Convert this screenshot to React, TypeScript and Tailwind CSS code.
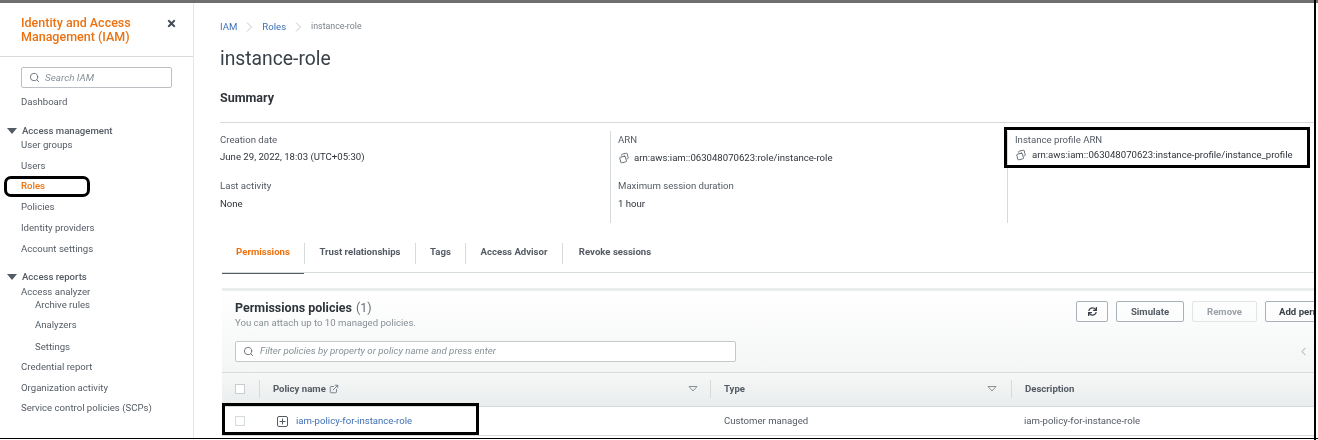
import React from "react";
import { Search, ChevronLeft, ExternalLink, Copy } from "lucide-react";
import { FaSync, FaTimes } from "react-icons/fa";

const Caret = () => (
  <svg width="14" height="6" viewBox="0 0 14 6" className="shrink-0">
    <path d="M2 0h10L7 6z" fill="#545b64" />
  </svg>
);

const SortCaret = () => (
  <svg width="10" height="6" viewBox="0 0 10 6" className="shrink-0">
    <path d="M1 .5h8L5 5z" fill="none" stroke="#8b9198" strokeWidth="1" />
  </svg>
);

const Chevron = ({ className }: { className: string }) => (
  <svg width="7" height="10" viewBox="0 0 7 10" className={className}>
    <path d="M1 .5l4.5 4.5L1 9.5" fill="none" stroke="#c3c9cc" strokeWidth="1" />
  </svg>
);

const NavItem = ({ label, h, active, sub }: { label: string; h: string; active?: boolean; sub?: boolean }) => (
  <div className={`flex items-center ${h} ${sub ? "pl-[35px]" : "pl-[21px]"} ${active ? "font-medium text-[#ec7211]" : "text-[#545b64]"}`}>
    {label}
  </div>
);

const Field = ({ label, children, h = "h-[17px]" }: { label: string; children: React.ReactNode; h?: string }) => (
  <div className="flex flex-col">
    <div className="flex h-[17px] items-center text-[#545b64]">{label}</div>
    <div className={`mt-[1px] flex ${h} items-center text-[#2f343b]`}>{children}</div>
  </div>
);

const tabs = [
  { label: "Trust relationships", w: "w-[111px]" },
  { label: "Tags", w: "w-[50px]" },
  { label: "Access Advisor", w: "w-[97px]" },
  { label: "Revoke sessions", w: "w-[105px]" },
];

const ToolButton = ({ children, disabled, w }: { children: React.ReactNode; disabled?: boolean; w: string }) => (
  <div
    className={`flex h-[21px] ${w} shrink-0 items-center justify-center whitespace-nowrap rounded-[2px] border font-bold ${
      disabled ? "border-[#e1e4e8] text-[#9ba1a8]" : "border-[#aab0b7] text-[#545b64]"
    }`}
  >
    {children}
  </div>
);

const App = () => {
  return (
    <div className="relative h-[440px] w-[1318px] overflow-hidden bg-white font-['Roboto',sans-serif] text-[9.6px] leading-none">
      <div className="h-[3px] bg-[#6f6f6f]" />
      <div className="flex h-[435px] blur-[0.3px]">
        {/* sidebar */}
        <aside className="relative w-[194px] shrink-0 border-r border-[#e4e6e8]">
          <div className="flex h-[54px] items-start justify-between border-b border-[#d9dbdd] pl-[21px] pr-[16px] pt-[13px]">
            <div className="text-[12.5px] font-medium leading-[14px] text-[#ec7211]">
              Identity and Access
              <br />
              Management (IAM)
            </div>
            <FaTimes size={11} className="mt-[2px] text-[#444b54]" />
          </div>
          <div className="mx-[21px] mt-[10px] flex h-[21px] w-[151px] items-center gap-[5px] rounded-[2px] border border-[#bcc0c5] pl-[7px] text-[9.9px] italic text-[#879196]">
            <Search size={11} strokeWidth={2} className="text-[#687078]" />
            Search IAM
          </div>
          <NavItem label="Dashboard" h="h-[21px] mt-[3px]" />
          <div className="mt-[12px] flex h-[14px] items-center gap-[3px] pl-[5px] font-medium text-[#545b64]">
            <Caret />
            Access management
          </div>
          <NavItem label="User groups" h="h-[14px]" />
          <NavItem label="Users" h="h-[19px] mt-[4px]" />
          <NavItem label="Roles" h="h-[20px] mt-[1px]" active />
          <NavItem label="Policies" h="h-[21px]" />
          <NavItem label="Identity providers" h="h-[21px]" />
          <NavItem label="Account settings" h="h-[21px]" />
          <div className="mt-[11px] flex h-[14px] items-center gap-[3px] pl-[5px] font-medium text-[#545b64]">
            <Caret />
            Access reports
          </div>
          <NavItem label="Access analyzer" h="h-[16px]" />
          <NavItem label="Archive rules" h="h-[10px]" sub />
          <NavItem label="Analyzers" h="h-[21px] mt-[4px]" sub />
          <NavItem label="Settings" h="h-[20px] mt-[2px]" sub />
          <NavItem label="Credential report" h="h-[19px]" />
          <NavItem label="Organization activity" h="h-[20px] mt-[2px]" />
          <NavItem label="Service control policies (SCPs)" h="h-[19px]" />
        </aside>

        {/* main */}
        <main className="min-w-0 flex-1 pl-[26px]">
          <div className="mt-[16px] flex h-[15px] items-center text-[#3f6fb5]">
            <span>IAM</span>
            <Chevron className="mx-[9px]" />
            <span>Roles</span>
            <Chevron className="mx-[9px]" />
            <span className="text-[8.8px] text-[#7b8289]">instance-role</span>
          </div>
          <h1 className="mt-[12px] flex h-[26px] items-center text-[19.3px] font-normal text-[#3a4048]">instance-role</h1>
          <div className="mt-[18px] flex h-[16px] items-center text-[12.5px] font-bold text-[#2f343b]">Summary</div>

          <div className="mt-[16px] border-t border-[#d5dbdb] pt-[8px]">
            <div className="flex h-[92px]">
              <div className="flex w-[390px] flex-col gap-[13px]">
                <Field label="Creation date" h="h-[15px]">
                  June 29, 2022, 18:03 (UTC+05:30)
                </Field>
                <Field label="Last activity">None</Field>
              </div>
              <div className="flex w-[397px] flex-col gap-[11px] border-l border-[#d5dbdb] pl-[7px]">
                <Field label="ARN">
                  <Copy size={10} className="ml-[1px] mr-[5px] -scale-x-100 rotate-[-15deg] text-[#545b64]" />
                  arn:aws:iam::063048070623:role/instance-role
                </Field>
                <Field label="Maximum session duration">1 hour</Field>
              </div>
              <div className="flex-1 border-l border-[#d5dbdb] pl-[7px]">
                <div className="flex h-[17px] items-center text-[#545b64]">Instance profile ARN</div>
                <div className="flex h-[14px] items-center whitespace-nowrap text-[#2f343b]">
                  <Copy size={10} className="ml-[1px] mr-[6px] -scale-x-100 rotate-[-15deg] text-[#545b64]" />
                  arn:aws:iam::063048070623:instance-profile/instance_profile
                </div>
              </div>
            </div>
          </div>

          {/* tabs */}
          <div className="ml-[2px] mt-[11px] flex h-[39px] items-start border-b border-[#d5dbdb] font-bold text-[#545b64]">
            <div className="relative flex h-[39px] w-[82px] items-center justify-center pb-[3px] text-[#ec7211]">
              <div className="absolute bottom-[-1px] left-0 right-0 h-[1px] bg-[#545b64]" />
              Permissions
            </div>
            {tabs.map((t) => (
              <div key={t.label} className="mt-[9px] flex h-[21px] items-center">
                <div className={`flex ${t.w} h-full items-center justify-center border-l border-[#d5dbdb] pb-[3px]`}>{t.label}</div>
              </div>
            ))}
          </div>

          {/* permissions policies panel */}
          <section className="ml-[2px] mt-[15px] border-t-[3px] border-[#eaeded]">
            <div className="h-[81px] bg-gradient-to-b from-white to-[#f4f5f5] pl-[13px]">
              <div className="flex justify-between pt-[10px]">
                <div>
                  <div className="flex h-[15px] items-center text-[12.5px] font-bold text-[#2f343b]">
                    Permissions policies<span className="ml-[4px] font-normal text-[#687078]">(1)</span>
                  </div>
                  <div className="mt-[1px] flex h-[12px] items-center text-[#879196]">You can attach up to 10 managed policies.</div>
                </div>
                <div className="flex w-[239px] shrink-0 gap-[8px] overflow-hidden">
                  <ToolButton w="w-[32px]">
                    <FaSync size={9} className="text-[#3a4048]" />
                  </ToolButton>
                  <ToolButton w="w-[68px]">Simulate</ToolButton>
                  <ToolButton w="w-[65px]" disabled>
                    Remove
                  </ToolButton>
                  <div className="flex h-[21px] w-[90px] shrink-0 items-center whitespace-nowrap rounded-[2px] border border-[#aab0b7] pl-[13px] font-bold text-[#3a4048]">
                    Add permissions
                  </div>
                </div>
              </div>
              <div className="mt-[12px] flex items-center justify-between pr-[5px]">
                <div className="flex h-[21px] w-[501px] items-center gap-[6px] rounded-[2px] border border-[#c4c8cc] bg-white pb-[1px] pl-[7px] text-[9.7px] italic text-[#879196]">
                  <Search size={11} className="text-[#687078]" />
                  Filter policies by property or policy name and press enter
                </div>
                <ChevronLeft size={13} className="text-[#c4c8cc]" />
              </div>
            </div>

            {/* table header */}
            <div className="flex h-[35px] items-center border-y border-[#d5dbdb] bg-gradient-to-b from-[#f6f7f7] to-[#eaeded] pb-[2px] font-bold text-[#545b64]">
              <div className="ml-[13px] h-[10px] w-[10px] shrink-0 border border-[#c9cdd1] bg-white" />
              <div className="ml-[14px] flex h-[18px] w-[451px] items-center border-l border-[#d5dbdb] pl-[13px]">
                Policy name
                <ExternalLink size={10} className="ml-[3px] text-[#687078]" />
                <span className="ml-auto mr-[12px]">
                  <SortCaret />
                </span>
              </div>
              <div className="flex h-[18px] w-[301px] items-center border-l border-[#d5dbdb] pl-[13px]">
                Type
                <span className="ml-auto mr-[14px]">
                  <SortCaret />
                </span>
              </div>
              <div className="flex h-[18px] flex-1 items-center border-l border-[#d5dbdb] pl-[13px]">Description</div>
            </div>

            {/* table row */}
            <div className="flex h-[29px] items-center border-b border-[#d5dbdb] text-[#545b64]">
              <div className="ml-[13px] h-[10px] w-[10px] shrink-0 border border-[#d5dbdb]" />
              <svg width="11" height="11" viewBox="0 0 11 11" className="ml-[32px] shrink-0">
                <rect x=".5" y=".5" width="10" height="10" rx="1.5" fill="none" stroke="#545b64" />
                <path d="M5.5 2.5v6M2.5 5.5h6" stroke="#545b64" />
              </svg>
              <div className="ml-[8px] w-[428px] text-[#3f6fb5]">iam-policy-for-instance-role</div>
              <div className="w-[300px]">Customer managed</div>
              <div>iam-policy-for-instance-role</div>
            </div>
          </section>
        </main>
        <div className="w-[3px] shrink-0" />
      </div>

      {/* screenshot frame and callouts drawn over the page */}
      <div className="absolute bottom-0 right-[2px] top-0 w-[2px] bg-black" />
      <div className="absolute bottom-[1px] left-0 right-0 h-[1px] bg-black" />
      <div className="absolute left-[4px] top-[176px] h-[21px] w-[86px] rounded-[7px] border-[3px] border-black" />
      <div className="absolute left-[1004px] top-[127px] h-[41px] w-[306px] border-[3px] border-black" />
      <div className="absolute left-[222px] top-[403px] h-[32px] w-[257px] border-[3px] border-black" />
    </div>
  );
};

export default App;
